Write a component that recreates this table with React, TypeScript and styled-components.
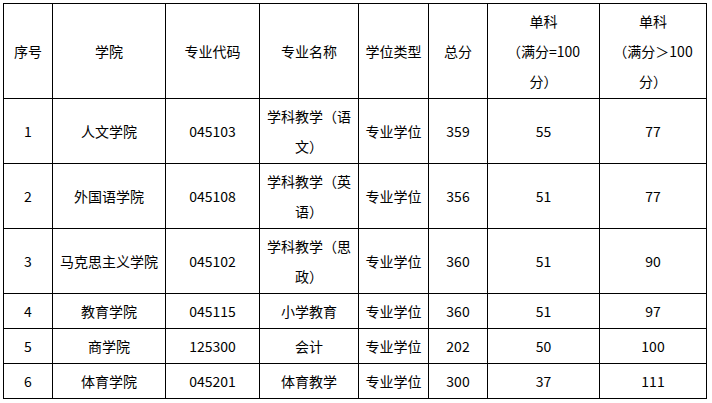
import styled, { createGlobalStyle } from 'styled-components';

const GlobalStyle = createGlobalStyle`
  html, body {
    margin: 0;
    padding: 0;
    background: #fff;
  }
  body {
    font-family: "Noto Sans CJK SC", "Noto Sans", sans-serif;
    color: #000;
  }
`;

const Page = styled.div`
  padding: 3px;
`;

const Table = styled.table`
  border-collapse: separate;
  border-spacing: 0;
  table-layout: fixed;
  width: 704px;
  border-top: 1px solid #000;
  border-left: 1px solid #000;
  font-size: 14px;
  line-height: 30px;
`;

const Col = styled.col<{ $w: number }>`
  width: ${({ $w }) => $w}px;
`;

const Cell = styled.td`
  box-sizing: border-box;
  padding: 2px 3px;
  border-right: 1px solid #000;
  border-bottom: 1px solid #000;
  text-align: center;
  vertical-align: middle;
  font-weight: normal;
  white-space: nowrap;
`;

const HeadCell = styled(Cell).attrs({ as: 'th' })``;

const widths = [49, 113, 94, 99, 70, 59, 112, 107];

type Row = {
  no: string;
  school: string;
  code: string;
  major: string[];
  kind: string;
  total: string;
  single: string;
  singleOver: string;
};

const rows: Row[] = [
  { no: '1', school: '人文学院', code: '045103', major: ['学科教学（语', '文）'], kind: '专业学位', total: '359', single: '55', singleOver: '77' },
  { no: '2', school: '外国语学院', code: '045108', major: ['学科教学（英', '语）'], kind: '专业学位', total: '356', single: '51', singleOver: '77' },
  { no: '3', school: '马克思主义学院', code: '045102', major: ['学科教学（思', '政）'], kind: '专业学位', total: '360', single: '51', singleOver: '90' },
  { no: '4', school: '教育学院', code: '045115', major: ['小学教育'], kind: '专业学位', total: '360', single: '51', singleOver: '97' },
  { no: '5', school: '商学院', code: '125300', major: ['会计'], kind: '专业学位', total: '202', single: '50', singleOver: '100' },
  { no: '6', school: '体育学院', code: '045201', major: ['体育教学'], kind: '专业学位', total: '300', single: '37', singleOver: '111' },
];

const Lines = ({ lines }: { lines: string[] }) => (
  <>
    {lines.map((l, i) => (
      <span key={i}>
        {i > 0 && <br />}
        {l}
      </span>
    ))}
  </>
);

export default function App() {
  return (
    <Page>
      <GlobalStyle />
      <Table>
        <colgroup>
          {widths.map((w, i) => (
            <Col key={i} $w={w} />
          ))}
        </colgroup>
        <thead>
          <tr>
            <HeadCell>序号</HeadCell>
            <HeadCell>学院</HeadCell>
            <HeadCell>专业代码</HeadCell>
            <HeadCell>专业名称</HeadCell>
            <HeadCell>学位类型</HeadCell>
            <HeadCell>总分</HeadCell>
            <HeadCell>
              <Lines lines={['单科', '（满分=100', '分）']} />
            </HeadCell>
            <HeadCell>
              <Lines lines={['单科', '（满分＞100', '分）']} />
            </HeadCell>
          </tr>
        </thead>
        <tbody>
          {rows.map((r) => (
            <tr key={r.no}>
              <Cell>{r.no}</Cell>
              <Cell>{r.school}</Cell>
              <Cell>{r.code}</Cell>
              <Cell>
                <Lines lines={r.major} />
              </Cell>
              <Cell>{r.kind}</Cell>
              <Cell>{r.total}</Cell>
              <Cell>{r.single}</Cell>
              <Cell>{r.singleOver}</Cell>
            </tr>
          ))}
        </tbody>
      </Table>
    </Page>
  );
}
